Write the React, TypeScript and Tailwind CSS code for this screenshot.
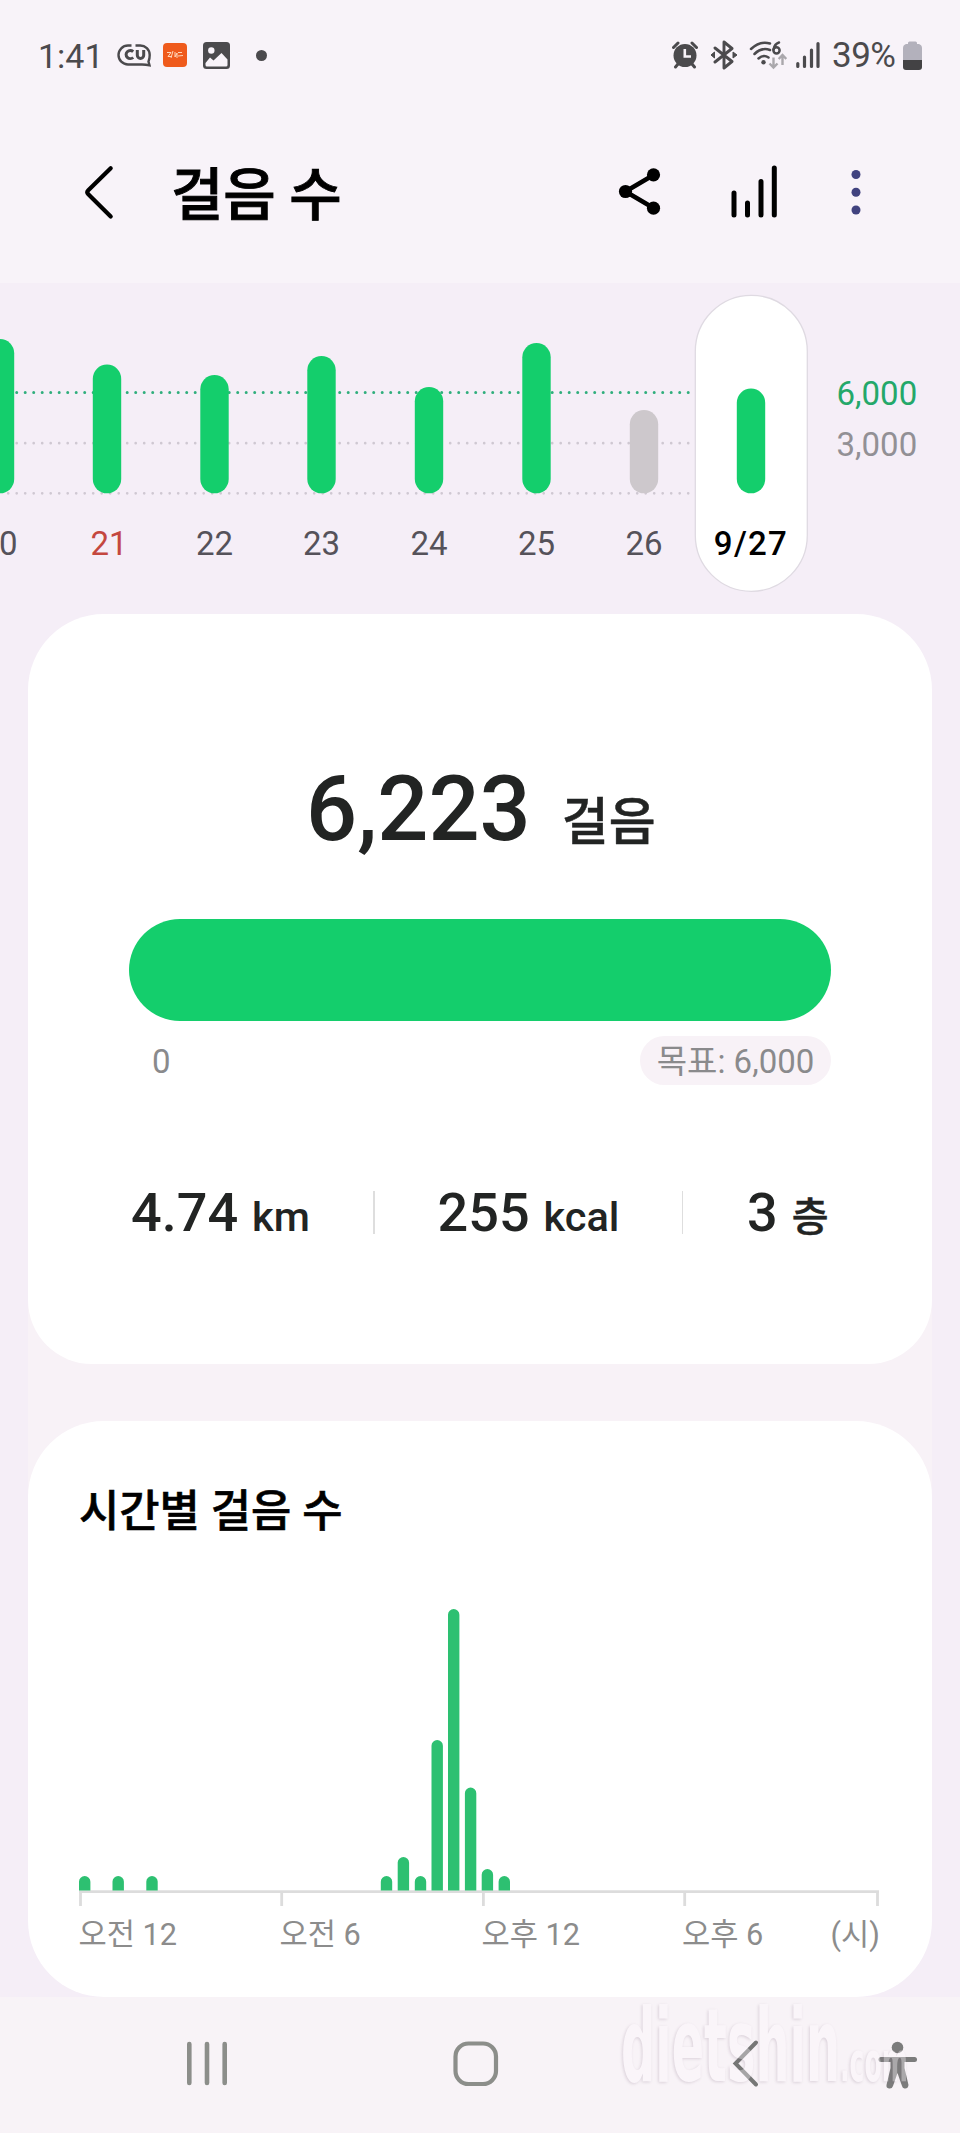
const DAYS = [
  { x: 0, top: 339, label: "20" },
  { x: 107, top: 364.5, label: "21", holiday: true },
  { x: 214.5, top: 375, label: "22" },
  { x: 321.5, top: 356, label: "23" },
  { x: 429, top: 387, label: "24" },
  { x: 536.5, top: 343, label: "25" },
  { x: 644, top: 410, label: "26", missed: true },
  { x: 751, top: 388.5, label: "9/27", selected: true },
];

const HOURS = [
  [84.7, 1876], [118.2, 1876], [152, 1876], [386.5, 1876], [403.4, 1857], [420.5, 1876],
  [437.2, 1740], [453.7, 1609], [470.6, 1787.5], [487.4, 1869], [504.3, 1876],
];

const TICKS = [80.5, 281.7, 483.4, 684.7, 877.5];

function StatusBar() {
  return (
    <div className="flex h-[110px] shrink-0 items-center text-[#4b4a4d]">
      <span className="ml-[38px] w-[79px] pt-[2px] text-[34px] leading-[40px]">1:41</span>
      <svg className="h-[26px] w-[34px]" viewBox="0 0 34 26">
        <path d="M14.500 3.500H11A9.500 9.500 0 0 0 11 22.500H25Q29 22.500 32.500 23.300L31.500 19.500Q32.700 17 32.700 13A9.500 9.500 0 0 0 23 3.500H18.500" fill="none" stroke="currentColor" strokeWidth="2.400" />
        <path d="M16.200 9.700A4.200 4 0 1 0 16.200 15.500" fill="none" stroke="currentColor" strokeWidth="3" />
        <path d="M20.300 8V13.300A3.200 3.200 0 0 0 26.700 13.300V8" fill="none" stroke="currentColor" strokeWidth="3" />
      </svg>
      <svg className="ml-[12px] h-[24px] w-[24px]" viewBox="0 0 24 24">
        <rect width="24" height="24" rx="4" fill="#ef5a1c" />
        <path d="M4 9.500h4l-3 4h4M10 8l-2 7M12 9v5l2-4v5M15 9.500h4M15 13l5-.5" fill="none" stroke="#ffd6b8" strokeWidth="1" />
      </svg>
      <svg className="ml-[16px] h-[27px] w-[27px]" viewBox="0 0 27 27">
        <rect width="27" height="27" rx="3.500" fill="currentColor" />
        <circle cx="8.300" cy="8.500" r="3.200" fill="#f8f3f9" />
        <path d="M2.500 21L7 15.500L10.500 18.500L18.500 11L24.500 17.500V23Q24.500 24.500 23 24.500H4Q2.500 24.500 2.500 23Z" fill="#f8f3f9" />
      </svg>
      <div className="ml-[26px] size-[11px] rounded-full bg-[#4b4a4d]" />
      <svg className="ml-[405px] h-[28px] w-[26px]" viewBox="0 0 26 28">
        <path d="M1.500 6.500L6 2M24.500 6.500L20 2" stroke="currentColor" strokeWidth="3" strokeLinecap="round" />
        <path d="M6 23L3.500 26M20 23L22.500 26" stroke="currentColor" strokeWidth="3" strokeLinecap="round" />
        <circle cx="13" cy="14.500" r="11.500" fill="currentColor" />
        <path d="M12.800 8V15.500H19" fill="none" stroke="#f8f3f9" strokeWidth="2.600" />
      </svg>
      <svg className="ml-[13px] h-[30px] w-[26px]" viewBox="0 0 26 30">
        <path d="M4 8L21 21.500L13 28V2L21 8.500L4 22" fill="none" stroke="currentColor" strokeWidth="2.900" strokeLinecap="round" strokeLinejoin="round" />
        <path d="M0 15L3.500 12V18ZM26 15L22 12V18Z" fill="currentColor" stroke="currentColor" strokeWidth="1" />
      </svg>
      <svg className="ml-[12px] h-[30px] w-[38px]" viewBox="0 0 38 30">
        <g fill="none" stroke="currentColor" strokeWidth="2.500" strokeLinecap="round">
          <path d="M2 9Q11 .5 21 3.500" />
          <path d="M5.500 14Q12.500 7 21 10" />
          <path d="M9.500 18.500Q14.500 14 19.500 17.500" />
          <path d="M30 2.500Q25.500 4 24.500 9.500" />
          <circle cx="27.500" cy="10.300" r="3.100" />
        </g>
        <circle cx="14.500" cy="22.300" r="2.200" fill="currentColor" />
        <path d="M24.500 17.500V27M20.500 23.500L24.500 27.500L28.500 23.500M33.500 25V15.500M29.700 19L33.500 15L37.300 19" fill="none" stroke="#aaa7ac" strokeWidth="2.400" />
      </svg>
      <svg className="ml-[9px] h-[28px] w-[24px]" viewBox="0 0 24 28">
        <path d="M1.800 22.500V25.500M8.500 16V25.500M15.500 9V25.500M22 2.500V25.500" stroke="currentColor" strokeWidth="3.200" strokeLinecap="round" />
      </svg>
      <span className="ml-[12px] w-[70px] whitespace-nowrap pt-[2px] text-[35px] leading-[40px] tracking-[-0.5px]">39%</span>
      <svg className="ml-px h-[29px] w-[19px]" viewBox="0 0 19 29">
        <path d="M5 3V2Q5 .5 6.500 .5H12.500Q14 .5 14 2V3H16Q19 4 19 7V19H0V7Q0 4 3 3Z" fill="#b3b1bc" />
        <path d="M0 19H19V26Q19 29 16 29H3Q0 29 0 26Z" fill="#434244" />
      </svg>
    </div>
  );
}

function Header() {
  return (
    <header className="flex h-[173px] shrink-0 items-start pt-[52px]">
      <svg className="ml-[82px] h-[60px] w-[34px]" viewBox="82 162 34 60">
        <path d="M110.700 168.300L88.300 190.300Q86.300 192.300 88.300 194.300L110.700 216.500" fill="none" stroke="#000" strokeWidth="4.200" strokeLinecap="round" />
      </svg>
      <h1 className="ml-[55px] w-[301px] pt-[2px] text-[57px] leading-[64px] font-medium tracking-[-0.3px] text-black [-webkit-text-stroke:0.9px_#000]">걸음 수</h1>
      <svg className="ml-[144px] h-[60px] w-[48px]" viewBox="616 162 48 60">
        <path d="M653.500 175L625.500 191.500L653.500 208" fill="none" stroke="#000" strokeWidth="4.600" />
        <circle cx="653.500" cy="174.800" r="6.600" />
        <circle cx="625.500" cy="191.500" r="6.600" />
        <circle cx="653.500" cy="208.200" r="6.600" />
      </svg>
      <svg className="ml-[62px] h-[60px] w-[60px]" viewBox="726 162 60 60">
        <path d="M734 193V215M747.500 203V215M761 181.500V215M774.300 168V215" stroke="#000" strokeWidth="5" strokeLinecap="round" />
      </svg>
      <svg className="ml-[64px] h-[60px] w-[12px]" viewBox="850 162 12 60" fill="#41427f">
        <circle cx="856" cy="174.500" r="4.500" />
        <circle cx="856" cy="192.300" r="4.500" />
        <circle cx="856" cy="210" r="4.500" />
      </svg>
    </header>
  );
}

function WeekChart() {
  return (
    <svg className="h-[331px] w-[960px] shrink-0 bg-[#f5eef7]" viewBox="0 283 960 331" fontSize="33">
      <g strokeLinecap="round" strokeDasharray="0 8.500">
        <path d="M8.200 392.600H691" stroke="#2fae7c" strokeWidth="3" />
        <path d="M8.200 443.200H691" stroke="#cfc8d2" strokeWidth="2.700" />
        <path d="M8.200 493.300H691" stroke="#cfc8d2" strokeWidth="2.700" />
      </g>
      <rect x="695.300" y="295.300" width="112" height="296" rx="56" fill="#fff" stroke="#dfdae2" strokeWidth="1.300" />
      {DAYS.map((d) => (
        <g key={d.label}>
          <rect x={d.x - 14.200} y={d.top} width="28.400" height={493.300 - d.top} rx="14.200" fill={d.missed ? "#cdc8cc" : "#14ce6c"} />
          <text
            x={d.label === "20" ? -1 : d.holiday ? 109 : d.x}
            y="555"
            textAnchor="middle"
            fontWeight={d.selected ? 500 : 400}
            letterSpacing={d.selected ? 1.3 : 0}
            fill={d.selected ? "#000" : d.holiday ? "#c4473f" : "#55525a"}
          >
            {d.label}
          </text>
        </g>
      ))}
      <text x="836.500" y="405.200" fill="#24a86a">6,000</text>
      <text x="836.500" y="456" fill="#929095">3,000</text>
    </svg>
  );
}

function Stat({ value, unit, small }: { value: string; unit: string; small?: boolean }) {
  return (
    <div className="flex items-baseline whitespace-nowrap font-medium text-[#222423]">
      <span className="text-[54px] leading-[60px]">{value}</span>
      {small ? (
        <span className="ml-[14px] text-[40px] leading-[60px] [-webkit-text-stroke:0.5px_#222423]">{unit}</span>
      ) : (
        <span className="ml-[14px] text-[41.500px] leading-[60px]">{unit}</span>
      )}
    </div>
  );
}

function StepsCard() {
  return (
    <section className="h-[750px] rounded-t-[76px] rounded-b-[64px] bg-white px-[101px] pt-[146px]">
      <div className="flex h-[100px] items-baseline pl-[177px] font-medium whitespace-nowrap text-[#222423]">
        <span className="text-[90px] leading-[100px]">6,223</span>
        <span className="ml-[31px] text-[51px] leading-[100px] [-webkit-text-stroke:0.5px_#222423]">걸음</span>
      </div>
      <div className="mt-[59px] h-[102px] rounded-full bg-[#14ce6c]" />
      <div className="mt-[15px] flex h-[49px] items-center justify-between text-[33px] leading-[49px] text-[#8a8a8c]">
        <span className="ml-[23px] pt-[2px]">0</span>
        <span className="h-[49px] w-[191px] rounded-full bg-[#f8f2f7] text-center text-[33px] leading-[52px] whitespace-nowrap">목표: 6,000</span>
      </div>
      <div className="mt-[97px] flex h-[60px] items-center">
        <div className="w-[244px] pt-[6px] pl-[2px]"><Stat value="4.74" unit="km" /></div>
        <div className="h-[43px] w-[1.500px] bg-[#dedede]" />
        <div className="w-[307px] pt-[6px] pl-[63px]"><Stat value="255" unit="kcal" /></div>
        <div className="h-[43px] w-[1.500px] bg-[#dedede]" />
        <div className="pt-[6px] pl-[64px]"><Stat value="3" unit="층" small /></div>
      </div>
    </section>
  );
}

function HourlyCard() {
  return (
    <section className="mt-[57px] h-[576px] rounded-[76px] bg-white pt-[60px]">
      <h2 className="ml-[51px] h-[60px] text-[43.800px] leading-[62px] font-medium whitespace-nowrap text-black [-webkit-text-stroke:0.6px_#000]">시간별 걸음 수</h2>
      <svg className="h-[440px] w-[904px]" viewBox="28 1541 904 440" fontSize="30.7" fill="#8c8c8c">
        <path d="M79 1891.700H879" stroke="#dcdcdc" strokeWidth="2.800" />
        {TICKS.map((x) => (
          <path key={x} d={`M${x} 1891V1906`} stroke="#dcdcdc" strokeWidth="2.800" />
        ))}
        {HOURS.map(([x, top]) => (
          <path key={x} d={`M${x - 5.700} 1890.500V${top + 5.700}a5.700 5.700 0 0 1 11.400 0V1890.500Z`} fill="#2dc071" />
        ))}
        <text x="78.500" y="1945">오전 12</text>
        <text x="279.500" y="1945">오전 6</text>
        <text x="481.500" y="1945">오후 12</text>
        <text x="682" y="1945">오후 6</text>
        <text x="880" y="1945" textAnchor="end">(시)</text>
      </svg>
    </section>
  );
}

function NavBar() {
  return (
    <nav className="relative flex h-[136px] shrink-0 items-start bg-[#f8f3f7] pt-[38px]">
      <svg className="ml-[180px] h-[60px] w-[54px]" viewBox="180 2035 54 60">
        <path d="M189.300 2044V2083M207 2044V2083M224.700 2044V2083" stroke="#8c8e8a" strokeWidth="4.600" strokeLinecap="round" />
      </svg>
      <svg className="ml-[216px] h-[60px] w-[54px]" viewBox="450 2035 54 60">
        <rect x="455.500" y="2043.500" width="40.500" height="40.500" rx="13" fill="none" stroke="#8c8e8a" strokeWidth="4.200" />
      </svg>
      <svg className="ml-[224px] h-[60px] w-[40px]" viewBox="728 2035 40 60">
        <path d="M756 2042.500L735.500 2063.500L756 2084.500" fill="none" stroke="#767776" strokeWidth="4" strokeLinecap="round" />
      </svg>
      <svg className="ml-[106px] h-[60px] w-[48px]" viewBox="874 2035 48 60" fill="#7c7c7c">
        <circle cx="897.500" cy="2047.500" r="5.800" />
        <path d="M881 2059.500H914.500" stroke="#7c7c7c" strokeWidth="5" strokeLinecap="round" />
        <path d="M890.500 2059H904.500V2068L908.500 2085Q908 2089 904.500 2088.500Q902.500 2088 902 2086L897.500 2073L893 2086Q892 2089 889 2088.500Q886 2088 886.500 2085L890.500 2068Z" />
      </svg>
      <div className="absolute -top-[30px] left-[610px] h-[140px] w-[330px] opacity-35">
        <svg className="h-[140px] w-[330px] drop-shadow-[-1px_1px_1.5px_rgba(110,85,110,0.6)]" viewBox="610 1967 330 140">
          <g fontFamily="'DejaVu Sans', sans-serif" fontWeight="700" fill="#fffaff">
            <text x="621" y="2081" fontSize="102" textLength="219" lengthAdjust="spacingAndGlyphs">dietshin</text>
            <text x="840" y="2081" fontSize="56" textLength="68" lengthAdjust="spacingAndGlyphs">.com</text>
          </g>
        </svg>
      </div>
    </nav>
  );
}

export default function App() {
  return (
    <div className="flex h-[2133px] w-[960px] flex-col overflow-hidden bg-[#f8f3f9] font-[family-name:Roboto,'Noto_Sans_CJK_KR',sans-serif]">
      <StatusBar />
      <Header />
      <WeekChart />
      <main className="h-[1383px] shrink-0 bg-[#f5eef7] px-[28px]">
        <div className="bg-[linear-gradient(to_bottom,#f5eef7_600px,#f8f2f7_600px,#f8f2f7_1000px,#f5eef7_1000px)]">
          <StepsCard />
          <HourlyCard />
        </div>
      </main>
      <NavBar />
    </div>
  );
}
